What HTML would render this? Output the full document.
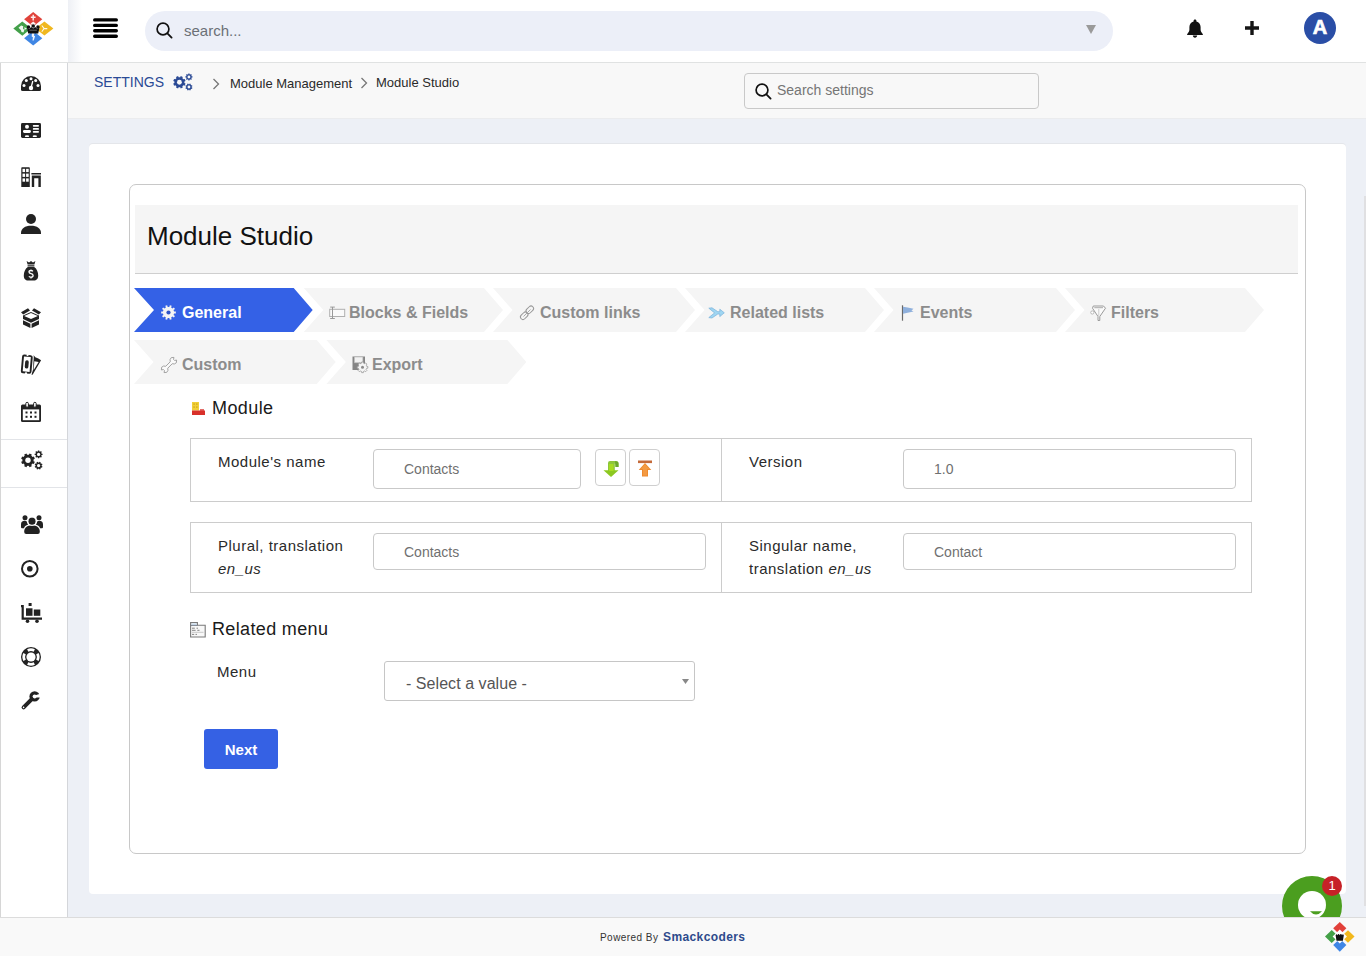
<!DOCTYPE html>
<html><head><meta charset="utf-8">
<style>
*{box-sizing:border-box;margin:0;padding:0}
html,body{width:1366px;height:956px;overflow:hidden;font-family:"Liberation Sans",sans-serif;background:#edf0f6;color:#222;position:relative}
.abs{position:absolute}
svg{position:absolute;overflow:visible}
#hdr{left:0;top:0;width:1366px;height:63px;background:#fff;border-bottom:1px solid #e0e2e2}
#search{left:145px;top:11px;width:968px;height:40px;border-radius:20px;background:#eceff8}
#search .ph{position:absolute;left:39px;top:11px;font-size:15px;color:#6b6f76}
#side{left:0;top:63px;width:68px;height:854px;background:#fff;border-right:1px solid #d4d6da;border-left:1px solid #d6d6d6}
.sep{position:absolute;left:1px;width:66px;height:1px;background:#e2e4e8}
#sbar{left:68px;top:63px;width:1298px;height:56px;background:#f8f8f8;border-bottom:1px solid #ebecee}
#card{left:89px;top:144px;width:1257px;height:750px;background:#fff;border-radius:4px;box-shadow:0 -1px 0 #e4e6ea}
#panel{left:129px;top:184px;width:1177px;height:670px;border:1px solid #c8c8c8;border-radius:7px;background:#fff}
#title{left:135px;top:205px;width:1163px;height:69px;background:#f5f5f5;border-bottom:1px solid #cfcfcf}
#title span{position:absolute;left:12px;top:16px;font-size:26px;color:#111}
#foot{left:0;top:917px;width:1366px;height:39px;background:#f9f9f9;border-top:1px solid #dcdcdc}
</style></head><body>
<div id="hdr" class="abs"></div>
<!-- logo -->
<svg style="left:13px;top:12px" width="41" height="34" viewBox="0 0 41 34">
 <polygon points="20.2,0 29.3,7.3 20.2,14.6 11.1,7.3" fill="#e0423a"/>
 <polygon points="0.3,16.6 9.3,9.4 18.3,16.6 9.3,23.8" fill="#43a04a"/>
 <polygon points="40.4,16.6 31.4,9.6 22.4,16.6 31.4,23.6" fill="#f0b820"/>
 <polygon points="20.2,33.6 29.3,26.2 20.2,18.8 11.1,26.2" fill="#3f86e4"/>
 <polygon points="20.2,11.5 27,16.6 20.2,22 13.4,16.6" fill="#fff"/>
 <g fill="#fff" opacity=".92">
  <path d="M19.5,2.8h1.4v1.8h1.7v1.3h-1.7v2.6h-1.4v-2.6h-1.7v-1.3h1.7z"/>
  <path d="M17.5,11.8 L20.2,9.6 L22.9,11.8 L20.2,13.2z"/>
  <path d="M5.5,15.8 l2.6,-2.4 l2.2,0.8 l-0.4,2.2 l1.4,1.6 l-0.8,2.4 l-2,-0.4 l-0.6,-2z"/>
  <path d="M11.5,15 l2,1.6 l-2,1.6z"/>
  <path d="M29.2,13.2 l2.6,3.4 l-2.6,3.4 l-0.8,-0.6 l2,-2.8 l-2,-2.8z M31.5,16 h2.8 v1.2 h-2.8z"/>
  <path d="M18.9,21 h2.6 l-0.6,2.6 l1.2,0.6 l-1.4,4.2 h-1.2 l0.4,-3.2 l-1.2,-0.6z"/>
 </g>
 <g fill="#111">
  <circle cx="15.5" cy="15" r="1.7"/><circle cx="20.2" cy="14" r="1.8"/><circle cx="24.9" cy="15" r="1.7"/>
  <path d="M13.9,15.6 L16.2,16.8 L18.2,15 L20.2,16.6 L22.2,15 L24.2,16.8 L26.5,15.6 L25.2,21.6 H15.2Z"/>
 </g>
 <path d="M16.5,18.2h7.4" stroke="#fff" stroke-width="0.6" opacity=".6"/>
</svg>
<div class="abs" style="left:68px;top:0;width:14px;height:62px;background:linear-gradient(90deg,#eef0f5,#fff)"></div>
<!-- hamburger -->
<svg style="left:93px;top:18px" width="25" height="20" viewBox="0 0 25 20">
 <g stroke="#000" stroke-width="3.4" stroke-linecap="round"><path d="M1.7,1.9H23.3M1.7,7.4H23.3M1.7,12.8H23.3M1.7,18.2H23.3"/></g>
</svg>
<div id="search" class="abs"><span class="ph">search...</span></div>
<svg style="left:156px;top:22px" width="17" height="17" viewBox="0 0 17 17">
 <circle cx="7" cy="7" r="5.9" stroke="#111" stroke-width="1.7" fill="none"/><path d="M11.4,11.4L15.6,15.6" stroke="#111" stroke-width="1.8" stroke-linecap="round"/>
</svg>
<svg style="left:1086px;top:25px" width="10" height="9" viewBox="0 0 10 9"><polygon points="0,0 10,0 5,9" fill="#9a9a9a"/></svg>
<!-- bell -->
<svg style="left:1187px;top:19px" width="16" height="19" viewBox="0 0 16 19">
 <path d="M8,0.5c0.9,0 1.4,0.6 1.4,1.3v0.6c2.6,0.6 4.2,2.8 4.2,5.6v2.6c0,1.8 0.8,3 2.1,4.3c0.4,0.4 0.2,1.2 -0.4,1.2H0.7c-0.6,0 -0.8,-0.8 -0.4,-1.2c1.3,-1.3 2.1,-2.5 2.1,-4.3V8c0,-2.8 1.6,-5 4.2,-5.6V1.8C6.6,1.1 7.1,0.5 8,0.5z M5.8,16.6h4.4c0,1.2 -1,2.2 -2.2,2.2s-2.2,-1 -2.2,-2.2z" fill="#111"/>
</svg>
<!-- plus -->
<svg style="left:1244px;top:21px" width="15" height="15" viewBox="0 0 15 15"><path d="M8,0V14M1,7H15" stroke="#151515" stroke-width="3.4"/></svg>
<!-- avatar -->
<div class="abs" style="left:1304px;top:12px;width:32px;height:32px;border-radius:50%;background:#2a4ea6;color:#fff;font-weight:700;font-size:20px;text-align:center;line-height:31px;-webkit-text-stroke:0.7px #fff">A</div>

<div id="side" class="abs"></div>
<div class="sep" style="top:439px"></div>
<div class="sep" style="top:487px"></div>
<!-- sidebar icons -->
<!-- gauge -->
<svg style="left:21px;top:76px" width="20" height="15" viewBox="0 0 20 15">
 <path d="M0,10A10,10 0 0 1 20,10V13.5Q20,15 18.5,15H1.5Q0,15 0,13.5Z" fill="#222"/>
 <g fill="#fff"><circle cx="10" cy="2.8" r="1.5"/><circle cx="5.3" cy="4.6" r="1.5"/><circle cx="14.7" cy="4.6" r="1.5"/><circle cx="3" cy="9.5" r="1.5"/><circle cx="17" cy="9.5" r="1.5"/><circle cx="10" cy="12" r="2.2"/></g>
 <path d="M10,12L11.8,5" stroke="#fff" stroke-width="1.3"/>
</svg>
<!-- address card -->
<svg style="left:21px;top:123px" width="20" height="15" viewBox="0 0 20 15">
 <rect x="0" y="0" width="20" height="15" rx="1.4" fill="#222"/>
 <g fill="#fff"><circle cx="6" cy="3.8" r="2"/><rect x="2" y="6.9" width="7.9" height="3" rx="1.3"/>
 <rect x="11.8" y="2" width="6.2" height="1.7" rx="0.85"/><rect x="11.8" y="5.1" width="6.2" height="1.7" rx="0.85"/><rect x="11.8" y="8" width="6.2" height="1.7" rx="0.85"/>
 <ellipse cx="6" cy="13.2" rx="2.2" ry="0.9"/><ellipse cx="13.8" cy="13.2" rx="2.2" ry="0.9"/></g>
</svg>
<!-- building -->
<svg style="left:21px;top:167px" width="20" height="20" viewBox="0 0 20 20">
 <path d="M0.3,1Q0.3,0.3 1,0.3H8Q8.8,0.3 8.8,1V20H0.3Z" fill="#222"/>
 <g fill="#fff"><rect x="1.5" y="1.8" width="2.6" height="3.3"/><rect x="5.1" y="1.8" width="2.6" height="3.3"/><rect x="1.5" y="6.6" width="2.6" height="3.3"/><rect x="5.1" y="6.6" width="2.6" height="3.3"/><rect x="1.5" y="11.4" width="2.6" height="3.3"/><rect x="5.1" y="11.4" width="2.6" height="3.3"/></g>
 <path d="M10.4,6H20V7.4H10.4Z M10.8,8.4H19.8V20H17.4V11.2H13.2V20H10.8Z" fill="#222"/>
</svg>
<!-- user -->
<svg style="left:21px;top:214px" width="20" height="20" viewBox="0 0 20 20">
 <circle cx="10" cy="5" r="5" fill="#222"/><path d="M0,19C0,14.5 4,11.8 10,11.8S20,14.5 20,19V20H0Z" fill="#222"/>
</svg>
<!-- money bag -->
<svg style="left:24px;top:261px" width="14" height="20" viewBox="0 0 14 20">
 <path d="M2.6,0L5,1.4L7,0L9,1.4L11.4,0L10.4,3.6H3.6Z M3.6,4.3H10.4V5.5H3.6Z M3.8,5.9H10.2C12.9,7.6 14.2,11 14.2,14.6C14.2,18.2 12.4,19.6 10,19.6H4C1.6,19.6 -0.2,18.2 -0.2,14.6C-0.2,11 1.1,7.6 3.8,5.9Z" fill="#222"/>
 <path d="M8.9,10.3Q8.3,9.5 7,9.5Q5,9.5 5,11.1Q5,12.3 7,12.7Q9.1,13.1 9.1,14.5Q9.1,16.2 7,16.2Q5.6,16.2 4.9,15.3 M7,8.4V9.5M7,16.2V17.4" stroke="#fff" stroke-width="1.3" fill="none"/>
</svg>
<!-- box open -->
<svg style="left:21px;top:308px" width="20" height="20" viewBox="0 0 20 20">
 <path d="M0,4.2L7,0.3L9,2.5L2.2,6.4Z M11,2.5L13,0.3L20,4.2L17.8,6.4Z" fill="#222"/>
 <path d="M2,7.5L10,4L18,7.5V11L10,14.8L2,11Z" fill="#222"/>
 <path d="M3.2,8L10,5.1L16.8,8L10,11Z" fill="#fff"/>
 <path d="M2,12.2L9.4,15.8V20L2,16.4Z M10.6,15.8L18,12.2V16.4L10.6,20Z" fill="#222"/>
</svg>
<!-- tickets -->
<svg style="left:18px;top:350px" width="26" height="30" viewBox="0 0 26 30">
 <path d="M15.6,5.2L17.3,7.3L20.3,8.4L23.1,10.3L14.6,24.8L13.2,24.3L15.2,19.2Z" fill="#222"/>
 <path d="M16.3,11.2L20.6,11.9L15.7,20Z" fill="#fff"/>
 <g transform="rotate(5 9 14)">
  <rect x="4.4" y="5.8" width="8.8" height="16.8" rx="1.2" fill="#fff" stroke="#fff" stroke-width="3.4"/>
  <rect x="4.4" y="5.8" width="8.8" height="16.8" rx="1.2" fill="#fff" stroke="#222" stroke-width="1.9"/>
  <circle cx="8.8" cy="5" r="1.1" fill="#fff"/><circle cx="8.8" cy="23.4" r="1.1" fill="#fff"/>
  <rect x="7" y="10.2" width="3.6" height="8.4" rx="1.8" fill="#222"/>
 </g>
</svg>
<!-- calendar -->
<svg style="left:21px;top:402px" width="20" height="20" viewBox="0 0 20 20">
 <path d="M1.5,2.5H18.5Q20,2.5 20,4V18.5Q20,20 18.5,20H1.5Q0,20 0,18.5V4Q0,2.5 1.5,2.5Z" fill="#222"/>
 <rect x="1.8" y="7.4" width="16.4" height="10.8" fill="#fff"/>
 <g fill="#fff" stroke="#222" stroke-width="1"><rect x="4.8" y="0.3" width="2.6" height="5" rx="1.3"/><rect x="12.6" y="0.3" width="2.6" height="5" rx="1.3"/></g>
 <g fill="#222"><rect x="4.5" y="9.5" width="2" height="2"/><rect x="9" y="9.5" width="2" height="2"/><rect x="13.5" y="9.5" width="2" height="2"/><rect x="4.5" y="13.8" width="2" height="2"/><rect x="9" y="13.8" width="2" height="2"/><rect x="13.5" y="13.8" width="2" height="2"/></g>
</svg>
<!-- cogs -->
<svg style="left:21px;top:450px" width="22" height="20" viewBox="0 0 22 20">
 <g fill="#222">
  <polygon points="12.60,10.30 12.53,11.18 13.84,11.80 12.90,14.07 11.53,13.59 10.96,14.26 10.29,14.83 10.77,16.20 8.50,17.14 7.88,15.83 7.00,15.90 6.12,15.83 5.50,17.14 3.23,16.20 3.71,14.83 3.04,14.26 2.47,13.59 1.10,14.07 0.16,11.80 1.47,11.18 1.40,10.30 1.47,9.42 0.16,8.80 1.10,6.53 2.47,7.01 3.04,6.34 3.71,5.77 3.23,4.40 5.50,3.46 6.12,4.77 7.00,4.70 7.88,4.77 8.50,3.46 10.77,4.40 10.29,5.77 10.96,6.34 11.53,7.01 12.90,6.53 13.84,8.80 12.53,9.42"/>
  <polygon points="20.46,3.21 20.61,3.68 21.54,3.70 21.54,5.10 20.61,5.12 20.46,5.59 20.24,6.02 20.88,6.69 19.89,7.68 19.22,7.04 18.79,7.26 18.32,7.41 18.30,8.34 16.90,8.34 16.88,7.41 16.41,7.26 15.98,7.04 15.31,7.68 14.32,6.69 14.96,6.02 14.74,5.59 14.59,5.12 13.66,5.10 13.66,3.70 14.59,3.68 14.74,3.21 14.96,2.78 14.32,2.11 15.31,1.12 15.98,1.76 16.41,1.54 16.88,1.39 16.90,0.46 18.30,0.46 18.32,1.39 18.79,1.54 19.22,1.76 19.89,1.12 20.88,2.11 20.24,2.78"/>
  <polygon points="20.70,15.60 20.66,16.08 21.51,16.46 20.97,17.76 20.11,17.42 19.79,17.79 19.42,18.11 19.76,18.97 18.46,19.51 18.08,18.66 17.60,18.70 17.12,18.66 16.74,19.51 15.44,18.97 15.78,18.11 15.41,17.79 15.09,17.42 14.23,17.76 13.69,16.46 14.54,16.08 14.50,15.60 14.54,15.12 13.69,14.74 14.23,13.44 15.09,13.78 15.41,13.41 15.78,13.09 15.44,12.23 16.74,11.69 17.12,12.54 17.60,12.50 18.08,12.54 18.46,11.69 19.76,12.23 19.42,13.09 19.79,13.41 20.11,13.78 20.97,13.44 21.51,14.74 20.66,15.12"/>
 </g>
 <g fill="#fff"><circle cx="7" cy="10.3" r="2.7"/><circle cx="17.6" cy="4.4" r="1.6"/><circle cx="17.6" cy="15.6" r="1.6"/></g>
</svg>
<!-- users -->
<svg style="left:21px;top:515px" width="22" height="19" viewBox="0 0 22 19">
 <g fill="#222"><circle cx="11" cy="6.2" r="3.6"/><circle cx="4" cy="2.8" r="2.5"/><circle cx="18" cy="2.8" r="2.5"/>
 <path d="M3.2,17C3.2,12.5 6,10.6 11,10.6S18.8,12.5 18.8,17Q18.8,19 16.8,19H5.2Q3.2,19 3.2,17Z"/>
 <path d="M0,9.5C0,7 1.3,5.8 3.6,5.8Q5,5.8 5.8,6.5Q6,8.5 7.2,9.6Q3.5,10.8 3,13.2H1Q0,13.2 0,12Z M22,9.5C22,7 20.7,5.8 18.4,5.8Q17,5.8 16.2,6.5Q16,8.5 14.8,9.6Q18.5,10.8 19,13.2H21Q22,13.2 22,12Z"/></g>
 <circle cx="11" cy="6.2" r="4.4" fill="none" stroke="#fff" stroke-width="0.8"/>
</svg>
<!-- dot circle -->
<svg style="left:21px;top:560px" width="18" height="18" viewBox="0 0 18 18">
 <circle cx="8.8" cy="8.8" r="7.8" stroke="#222" stroke-width="2" fill="none"/><circle cx="8.8" cy="8.8" r="2.8" fill="#222"/>
</svg>
<!-- dolly flatbed -->
<svg style="left:21px;top:603px" width="21" height="20" viewBox="0 0 21 20">
 <g fill="#222"><path d="M0,2H2.8V14.5H21V16.8H0.6V4.3H0Z"/><rect x="7.6" y="0" width="3" height="3"/><rect x="5" y="5.3" width="6.5" height="7.5"/><rect x="12.8" y="6.5" width="6.5" height="6.3"/>
 <circle cx="6.5" cy="18.3" r="1.8"/><circle cx="16" cy="18.3" r="1.8"/></g>
</svg>
<!-- life ring -->
<svg style="left:21px;top:647px" width="20" height="20" viewBox="0 0 20 20">
 <circle cx="10" cy="10" r="10" fill="#222"/>
 <path d="M6.10,2.34 A8.6,8.6 0 0 1 13.90,2.34 L12.68,4.74 A5.9,5.9 0 0 0 7.32,4.74 Z M17.66,6.10 A8.6,8.6 0 0 1 17.66,13.90 L15.26,12.68 A5.9,5.9 0 0 0 15.26,7.32 Z M13.90,17.66 A8.6,8.6 0 0 1 6.10,17.66 L7.32,15.26 A5.9,5.9 0 0 0 12.68,15.26 Z M2.34,13.90 A8.6,8.6 0 0 1 2.34,6.10 L4.74,7.32 A5.9,5.9 0 0 0 4.74,12.68 Z" fill="#fff"/>
 <circle cx="10" cy="10" r="4.6" fill="#fff"/>
</svg>
<!-- wrench -->
<svg style="left:21px;top:691px" width="19" height="19" viewBox="0 0 19 19">
 <circle cx="13.6" cy="5.4" r="5.2" fill="#222"/>
 <circle cx="13.6" cy="5.4" r="2" fill="#fff"/>
 <polygon points="13.6,4.4 20,2.6 20,6.6 13.6,6.4" fill="#fff"/>
 <path d="M10.8,8.2L2.6,16.4" stroke="#222" stroke-width="4" stroke-linecap="round"/>
 <circle cx="2.6" cy="16.4" r="0.8" fill="#fff"/>
</svg>
<div id="sbar" class="abs"></div>
<!-- settings bar -->
<div class="abs" style="left:94px;top:74px;font-size:14px;color:#2b4a95;line-height:16px">SETTINGS</div>
<svg style="left:173px;top:73px" width="20" height="18" viewBox="0 0 22 20">
 <g fill="#2b4a95">
  <polygon points="12.60,10.30 12.53,11.18 13.84,11.80 12.90,14.07 11.53,13.59 10.96,14.26 10.29,14.83 10.77,16.20 8.50,17.14 7.88,15.83 7.00,15.90 6.12,15.83 5.50,17.14 3.23,16.20 3.71,14.83 3.04,14.26 2.47,13.59 1.10,14.07 0.16,11.80 1.47,11.18 1.40,10.30 1.47,9.42 0.16,8.80 1.10,6.53 2.47,7.01 3.04,6.34 3.71,5.77 3.23,4.40 5.50,3.46 6.12,4.77 7.00,4.70 7.88,4.77 8.50,3.46 10.77,4.40 10.29,5.77 10.96,6.34 11.53,7.01 12.90,6.53 13.84,8.80 12.53,9.42"/>
  <polygon points="20.46,3.21 20.61,3.68 21.54,3.70 21.54,5.10 20.61,5.12 20.46,5.59 20.24,6.02 20.88,6.69 19.89,7.68 19.22,7.04 18.79,7.26 18.32,7.41 18.30,8.34 16.90,8.34 16.88,7.41 16.41,7.26 15.98,7.04 15.31,7.68 14.32,6.69 14.96,6.02 14.74,5.59 14.59,5.12 13.66,5.10 13.66,3.70 14.59,3.68 14.74,3.21 14.96,2.78 14.32,2.11 15.31,1.12 15.98,1.76 16.41,1.54 16.88,1.39 16.90,0.46 18.30,0.46 18.32,1.39 18.79,1.54 19.22,1.76 19.89,1.12 20.88,2.11 20.24,2.78"/>
  <polygon points="20.70,15.60 20.66,16.08 21.51,16.46 20.97,17.76 20.11,17.42 19.79,17.79 19.42,18.11 19.76,18.97 18.46,19.51 18.08,18.66 17.60,18.70 17.12,18.66 16.74,19.51 15.44,18.97 15.78,18.11 15.41,17.79 15.09,17.42 14.23,17.76 13.69,16.46 14.54,16.08 14.50,15.60 14.54,15.12 13.69,14.74 14.23,13.44 15.09,13.78 15.41,13.41 15.78,13.09 15.44,12.23 16.74,11.69 17.12,12.54 17.60,12.50 18.08,12.54 18.46,11.69 19.76,12.23 19.42,13.09 19.79,13.41 20.11,13.78 20.97,13.44 21.51,14.74 20.66,15.12"/>
 </g>
 <g fill="#f8f8f8"><circle cx="7" cy="10.3" r="2.7"/><circle cx="17.6" cy="4.4" r="1.6"/><circle cx="17.6" cy="15.6" r="1.6"/></g>
</svg>
<svg style="left:212px;top:78px" width="8" height="12" viewBox="0 0 8 12"><path d="M1.5,1L6.5,6L1.5,11" stroke="#777" stroke-width="1.3" fill="none"/></svg>
<div class="abs" style="left:230px;top:76px;font-size:13px;color:#2a2a2a;line-height:16px">Module Management</div>
<svg style="left:360px;top:77px" width="8" height="12" viewBox="0 0 8 12"><path d="M1.5,1L6.5,6L1.5,11" stroke="#777" stroke-width="1.3" fill="none"/></svg>
<div class="abs" style="left:376px;top:75px;font-size:13px;color:#2a2a2a;line-height:16px">Module Studio</div>
<div class="abs" style="left:744px;top:73px;width:295px;height:36px;border:1px solid #c9c9c9;border-radius:4px;background:#f8f8f8"></div>
<svg style="left:755px;top:83px" width="17" height="17" viewBox="0 0 17 17">
 <circle cx="7" cy="7" r="5.9" stroke="#111" stroke-width="1.7" fill="none"/><path d="M11.4,11.4L15.6,15.6" stroke="#111" stroke-width="1.8" stroke-linecap="round"/>
</svg>
<div class="abs" style="left:777px;top:82px;font-size:14px;color:#757575;line-height:16px">Search settings</div>

<div id="card" class="abs"></div>
<div id="panel" class="abs"></div>
<div id="title" class="abs"><span>Module Studio</span></div>
<!-- tabs -->
<svg style="left:134px;top:288px" width="1140" height="96" viewBox="0 0 1140 96">
 <defs><filter id="sb" x="-5%" y="-5%" width="110%" height="110%"><feGaussianBlur stdDeviation="0.7"/></filter><filter id="sb2" x="-5%" y="-5%" width="110%" height="110%"><feGaussianBlur stdDeviation="0.8"/></filter></defs>
 <g fill="#f5f5f5" filter="url(#sb)">
  <polygon points="169.8,0 350,0 369,22 350,44 169.8,44 189.3,22"/>
  <polygon points="359,0 542,0 561,22 542,44 359,44 378.5,22"/>
  <polygon points="551,0 731,0 750,22 731,44 551,44 570.5,22"/>
  <polygon points="740,0 922,0 941,22 922,44 740,44 759.5,22"/>
  <polygon points="931,0 1111,0 1130,22 1111,44 931,44 950.5,22"/>
  <polygon points="0,52 182.7,52 201.7,74 182.7,96 0,96 19.5,74"/>
  <polygon points="192.4,52 373.4,52 392.4,74 373.4,96 192.4,96 211.9,74"/>
 </g>
 <polygon points="0,0 159.7,0 178.7,22 159.7,44 0,44 20,22" fill="#3461e6"/>
</svg>
<div class="abs" style="left:182px;top:304px;font-size:16px;font-weight:700;color:#fff;line-height:18px">General</div>
<div class="abs" style="left:349px;top:304px;font-size:16px;font-weight:700;color:#8c8c8c;line-height:18px">Blocks &amp; Fields</div>
<div class="abs" style="left:540px;top:304px;font-size:16px;font-weight:700;color:#8c8c8c;line-height:18px">Custom links</div>
<div class="abs" style="left:730px;top:304px;font-size:16px;font-weight:700;color:#8c8c8c;line-height:18px">Related lists</div>
<div class="abs" style="left:920px;top:304px;font-size:16px;font-weight:700;color:#8c8c8c;line-height:18px">Events</div>
<div class="abs" style="left:1111px;top:304px;font-size:16px;font-weight:700;color:#8c8c8c;line-height:18px">Filters</div>
<div class="abs" style="left:182px;top:356px;font-size:16px;font-weight:700;color:#8c8c8c;line-height:18px">Custom</div>
<div class="abs" style="left:372px;top:356px;font-size:16px;font-weight:700;color:#8c8c8c;line-height:18px">Export</div>
<!-- tab icons -->
<svg style="left:161px;top:305px" width="15" height="15" viewBox="0 0 15 15">
 <polygon points="12.83,5.77 13.02,6.54 14.84,6.54 14.84,8.46 13.02,8.46 12.82,9.24 12.53,9.96 14.00,11.04 12.87,12.59 11.40,11.52 10.79,12.03 10.12,12.45 10.68,14.18 8.86,14.77 8.29,13.04 7.49,13.10 6.71,13.04 6.14,14.77 4.32,14.18 4.88,12.45 4.20,12.03 3.60,11.52 2.13,12.59 1.00,11.04 2.47,9.96 2.17,9.23 1.98,8.46 0.16,8.46 0.16,6.54 1.98,6.54 2.18,5.76 2.47,5.04 1.00,3.96 2.13,2.41 3.60,3.48 4.21,2.97 4.88,2.55 4.32,0.82 6.14,0.23 6.71,1.96 7.51,1.90 8.29,1.96 8.86,0.23 10.68,0.82 10.12,2.55 10.80,2.97 11.40,3.48 12.87,2.41 14.00,3.96 12.53,5.04" fill="#f4f4f4"/>
 <circle cx="7.5" cy="7.5" r="2.1" fill="#2f55c8"/>
</svg>
<svg style="left:329px;top:306px" width="17" height="14" viewBox="0 0 17 14">
 <rect x="0.7" y="3.3" width="15" height="7.2" fill="#fafafa" stroke="#b0b0b0" stroke-width="1"/>
 <path d="M3.5,1V12.6M1.2,1.1H5.8M1.2,12.5H5.8" stroke="#999" stroke-width="1" fill="none"/>
</svg>
<svg style="left:519px;top:305px" width="16" height="16" viewBox="0 0 16 16">
 <g fill="none" stroke="#999" stroke-width="1"><rect x="8.3" y="0.5" width="5" height="8.5" rx="2.5" transform="rotate(45 10.8 4.75)"/><rect x="2.7" y="6.5" width="5" height="8.5" rx="2.5" transform="rotate(45 5.2 10.75)"/></g>
 <path d="M4.5,11.5L11.5,4.5" stroke="#aaa" stroke-width="1"/>
</svg>
<svg style="left:708px;top:307px" width="17" height="12" viewBox="0 0 17 12">
 <path d="M0.8,1.2L4,0.8L9.8,4.7H11.8V2.2L16.3,5.8L11.8,9.6V7H9.8L4,11L0.8,10.6L6.6,5.9Z" fill="#9fd6f2" stroke="#78b0da" stroke-width="0.7"/>
</svg>
<svg style="left:901px;top:305px" width="14" height="16" viewBox="0 0 14 16">
 <path d="M1.5,0.3V15.7" stroke="#6a6a6a" stroke-width="1.2"/>
 <path d="M2,1.8Q6,2.2 12.5,3.8L10.5,5.5L12.5,6.5Q6,8 2,8.8Z" fill="#8fb0dc"/>
</svg>
<svg style="left:1090px;top:305px" width="16" height="16" viewBox="0 0 16 16">
 <path d="M3.3,1H13.5L15.5,3.2L9.8,11.5V15.5H8V11.5L2.5,3.2Z" fill="#fbfbfb" stroke="#9a9a9a" stroke-width="1"/>
 <path d="M4.3,2.7H13" stroke="#aaa" stroke-width="1"/>
 <path d="M8.8,4V11" stroke="#ccc" stroke-width="1"/>
 <circle cx="2.3" cy="7.5" r="1.6" fill="#fff" stroke="#aaa" stroke-width="0.8"/>
</svg>
<svg style="left:160px;top:356px" width="18" height="18" viewBox="0 0 18 18">
 <path transform="translate(9,9) rotate(-45) scale(0.86) translate(-10.5,-8)" d="M0.2,5.8L2.6,3.8L5.2,4.4L6.8,6.4H14.2L15.8,4.4L18.4,3.8L20.8,5.8L18.8,7.2V8.8L20.8,10.2L18.4,12.2L15.8,11.6L14.2,9.6H6.8L5.2,11.6L2.6,12.2L0.2,10.2L2.2,8.8V7.2Z" fill="#fafafa" stroke="#9a9a9a" stroke-width="1" stroke-linejoin="round"/>
</svg>
<svg style="left:351px;top:355px" width="20" height="20" viewBox="0 0 20 20">
 <rect x="1.5" y="1.5" width="12.5" height="13.5" fill="#858585"/>
 <rect x="3.3" y="2" width="8.6" height="5.8" fill="#f2f2f2" stroke="#b5b5b5" stroke-width="0.6"/>
 <polygon points="15.47,10.65 15.70,11.38 16.83,11.43 16.83,13.17 15.70,13.22 15.47,13.95 15.12,14.62 15.88,15.45 14.65,16.68 13.82,15.92 13.15,16.27 12.42,16.50 12.37,17.63 10.63,17.63 10.58,16.50 9.85,16.27 9.18,15.92 8.35,16.68 7.12,15.45 7.88,14.62 7.53,13.95 7.30,13.22 6.17,13.17 6.17,11.43 7.30,11.38 7.53,10.65 7.88,9.98 7.12,9.15 8.35,7.92 9.18,8.68 9.85,8.33 10.58,8.10 10.63,6.97 12.37,6.97 12.42,8.10 13.15,8.33 13.82,8.68 14.65,7.92 15.88,9.15 15.12,9.98" fill="#f4f4f4" stroke="#9a9a9a" stroke-width="0.8"/>
 <circle cx="11.5" cy="12.3" r="1.5" fill="#8a8a8a"/>
</svg>
<!-- form -->
<svg style="left:191px;top:401px" width="15" height="15" viewBox="0 0 15 15">
 <rect x="1" y="1" width="7" height="8.5" fill="#f0d03a"/>
 <g fill="#d9b020"><rect x="2.3" y="2.3" width="1.6" height="1.6"/><rect x="5" y="2.3" width="1.6" height="1.6"/><rect x="2.3" y="5.3" width="1.6" height="1.6"/><rect x="5" y="5.3" width="1.6" height="1.6"/></g>
 <rect x="1" y="9.5" width="13" height="4.5" fill="#d8302a"/>
 <rect x="9" y="8.3" width="4" height="1.4" fill="#d8302a"/>
</svg>
<div class="abs" style="left:212px;top:398px;font-size:18px;color:#1a1a1a;letter-spacing:0.4px;line-height:20px">Module</div>
<style>
.row{position:absolute;left:190px;width:1062px;border:1px solid #cccccc;background:#fff}
.vd{position:absolute;left:530px;top:0;bottom:0;width:1px;background:#cccccc}
.lbl{position:absolute;font-size:15px;color:#2a2a2a;letter-spacing:0.5px;line-height:23px}
.inp{position:absolute;border:1px solid #c9c9c9;border-radius:4px;background:#fff;font-size:14px;color:#707070;padding-left:30px}
.btn{position:absolute;width:31px;height:37px;border:1px solid #cfcfcf;border-radius:4px;background:#fff}
</style>
<div class="row" style="top:438px;height:64px"><div class="vd"></div></div>
<div class="lbl" style="left:218px;top:450px">Module's name</div>
<div class="inp" style="left:373px;top:449px;width:208px;height:40px;line-height:39px">Contacts</div>
<div class="btn" style="left:595px;top:449px"></div>
<div class="btn" style="left:629px;top:449px"></div>
<svg style="left:603px;top:460px" width="17" height="18" viewBox="0 0 17 18">
 <path d="M5,11V3Q5,1 7,1H13Q15.5,1 15.5,3.5V7H12.5V4Q12.5,3.5 12,3.5H11.8V11Z" fill="#8cc63a"/>
 <path d="M12,1.2Q15.5,1 15.5,3.5V7H12.5Z" fill="#6aa82a"/>
 <path d="M0.5,10.2H15.5L8,17Z" fill="#8cc820"/>
 <path d="M6,4V11H10.5V4Z" fill="#a6dc20"/>
</svg>
<svg style="left:637px;top:460px" width="16" height="18" viewBox="0 0 16 18">
 <rect x="1" y="0.5" width="14" height="2.6" fill="#c46a3a"/>
 <path d="M8,3.1L14.3,10H11V16.6H5V10H1.7Z" fill="#ee8a2e"/>
 <path d="M8,4.3L12.2,9H10V15.5H6V9H3.8Z" fill="#f39a42"/>
</svg>
<div class="lbl" style="left:749px;top:450px">Version</div>
<div class="inp" style="left:903px;top:449px;width:333px;height:40px;line-height:38px">1.0</div>

<div class="row" style="top:522px;height:71px"><div class="vd"></div></div>
<div class="lbl" style="left:218px;top:534px">Plural, translation<br><i>en_us</i></div>
<div class="inp" style="left:373px;top:533px;width:333px;height:37px;line-height:37px">Contacts</div>
<div class="lbl" style="left:749px;top:534px">Singular name,<br>translation <i>en_us</i></div>
<div class="inp" style="left:903px;top:533px;width:333px;height:37px;line-height:37px">Contact</div>

<svg style="left:190px;top:622px" width="16" height="16" viewBox="0 0 16 16">
 <path d="M0.6,0.6H7.4V3.3H15.2V15H0.6Z" fill="#f8f8f8" stroke="#7a7a7a" stroke-width="1.1"/>
 <rect x="1.6" y="1.4" width="5" height="1.6" fill="#dbeeff"/>
 <path d="M0.6,3.3H7.4" stroke="#6a7280" stroke-width="1"/>
 <g stroke="#777" stroke-width="0.9"><path d="M2,6.2H4.8M6.5,6.2H8M2,8.3H5.6M7.3,8.3H9.5M2,12.4H4.2M5.5,12.4H7"/></g>
 <path d="M2,10.3H13.5" stroke="#bbb" stroke-width="0.8"/>
</svg>
<div class="abs" style="left:212px;top:619px;font-size:18px;color:#1a1a1a;letter-spacing:0.35px;line-height:20px">Related menu</div>
<div class="lbl" style="left:217px;top:660px">Menu</div>
<div class="abs" style="left:384px;top:661px;width:311px;height:40px;border:1px solid #c6c6c6;border-radius:3px;background:#fff;font-size:16px;color:#555;line-height:43px;padding-left:21px;letter-spacing:0.05px">- Select a value -</div>
<svg style="left:682px;top:679px" width="7" height="5" viewBox="0 0 7 5"><polygon points="0,0 7,0 3.5,5" fill="#888"/></svg>
<div class="abs" style="left:204px;top:729px;width:74px;height:40px;border-radius:3px;background:#3561e4;color:#fff;font-size:15px;font-weight:700;text-align:center;line-height:42px">Next</div>

<!-- chat button -->
<div class="abs" style="left:1282px;top:876px;width:60px;height:60px;border-radius:50%;background:#4b9e1f"></div>
<div class="abs" style="left:1298px;top:891px;width:28px;height:28px;border-radius:50%;background:#fff"></div>
<svg style="left:1310px;top:910.5px" width="12" height="4" viewBox="0 0 12 4"><path d="M0,0.2Q6,7 12,0.2Z" fill="#4b9e1f"/></svg>
<div class="abs" style="left:1322px;top:876px;width:20px;height:20px;border-radius:50%;background:#c62127;color:#fff;font-size:13px;text-align:center;line-height:20px">1</div>

<div class="abs" style="left:1364px;top:196px;width:2px;height:710px;background:#e0e0e2"></div>
<div id="foot" class="abs"></div>
<div class="abs" style="left:600px;top:932px;font-size:10px;color:#333;letter-spacing:0.45px;line-height:12px">Powered By</div>
<div class="abs" style="left:663px;top:930px;font-size:12px;font-weight:700;color:#2d4a8c;letter-spacing:0.4px;line-height:14px">Smackcoders</div>
<svg style="left:1325px;top:922px" width="30" height="30" viewBox="0 0 41 34" preserveAspectRatio="none">
 <polygon points="20.2,0 29.2,7.2 20.2,14.4 11.2,7.2" fill="#e2403a"/>
 <polygon points="0,16.4 9.2,9.2 18.4,16.4 9.2,23.9" fill="#43a047"/>
 <polygon points="40.4,16.4 31.4,9.4 22.4,16.4 31.4,23.5" fill="#f2b81c"/>
 <polygon points="20.2,33.6 29.2,26.1 20.2,19 11.2,26.1" fill="#3f86e6"/>
 <polygon points="20.2,8.5 30,16.4 20.2,24.5 10.4,16.4" fill="#fff"/>
 <path d="M14.5,15 q1.2,-2.4 2.4,0 q1.6,-2.6 3.2,0 q1.6,-2.6 3.2,0 q1.2,-2.4 2.4,0 l-1.2,6.3 h-8.8 z" fill="#111"/>
</svg>
</body></html>
